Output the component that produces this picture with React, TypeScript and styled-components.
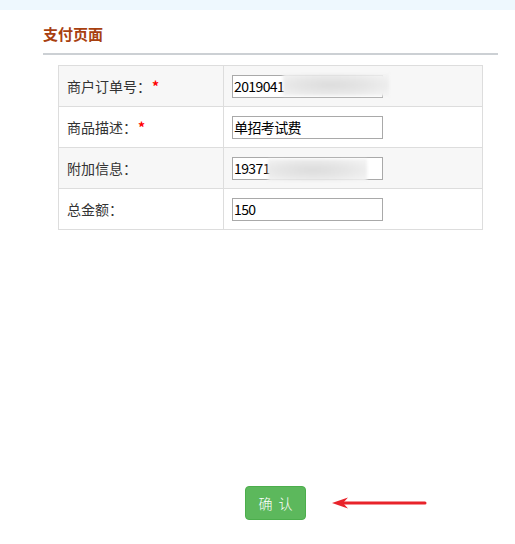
import React from "react";
import styled, { createGlobalStyle } from "styled-components";

const Global = createGlobalStyle`
  html, body { margin: 0; padding: 0; background: #fff; }
  body { font-family: "Noto Sans CJK SC", "Liberation Sans", sans-serif; }
`;

const TopBar = styled.div`
  height: 10px;
  background: #eef8fe;
`;

const Main = styled.div`
  width: 455px;
  margin-left: 43px;
`;

const Title = styled.h2`
  margin: 12px 0 0;
  padding-bottom: 7px;
  line-height: 24px;
  font-size: 15px;
  font-weight: bold;
  color: #a8400f;
  border-bottom: 2px solid #ccd0d4;
`;

const Table = styled.table`
  margin: 10px 0 0 15px;
  width: 425px;
  border-collapse: collapse;
  border: 1px solid #dddddd;
`;

const Row = styled.tr<{ $shade: boolean }>`
  height: 41px;
  background: ${(p) => (p.$shade ? "#f7f7f7" : "#ffffff")};
`;

const LabelCell = styled.td`
  width: 156px;
  padding: 0 0 0 8px;
  border: 1px solid #dddddd;
  font-size: 14px;
  color: #333;
  vertical-align: middle;
`;

const Star = styled.span`
  color: #ff0000;
  margin-left: 1px;
  font-weight: bold;
`;

const FieldCell = styled.td`
  padding: 0 0 0 8px;
  border: 1px solid #dddddd;
  vertical-align: middle;
`;

const FieldWrap = styled.div`
  position: relative;
  width: 151px;
  height: 23px;
`;

const Input = styled.input`
  box-sizing: border-box;
  display: block;
  width: 151px;
  height: 23px;
  margin: 0;
  padding: 0 1px;
  border: 1px solid #a9a9a9;
  background: #fff;
  font-family: "Noto Sans CJK SC", "Liberation Sans", sans-serif;
  font-size: 14px;
  letter-spacing: -0.6px;
  color: #000;
  outline: none;
`;

const Blur = styled.div<{ $l: number; $t: number; $w: number }>`
  position: absolute;
  left: ${(p) => p.$l}px;
  top: ${(p) => p.$t}px;
  width: ${(p) => p.$w}px;
  height: 22px;
  background: radial-gradient(ellipse at 45% 50%, #dcdcdc 0%, #e6e6e6 45%, #f2f2f2 85%);
  filter: blur(1.5px);
`;

const Footer = styled.div`
  display: flex;
  align-items: center;
  margin-top: 256px;
  padding-left: 245px;
  gap: 25px;
`;

const Button = styled.button`
  width: 61px;
  height: 34px;
  border: 1px solid #4cae4c;
  border-radius: 4px;
  background: #5cb85c;
  color: #fff;
  font-family: "Noto Sans CJK SC", sans-serif;
  font-size: 14px;
  font-weight: 300;
  letter-spacing: 6px;
  padding: 0 0 0 6px;
  cursor: pointer;
`;

const rows = [
  { label: "商户订单号：", req: true, value: "2019041", blur: { l: 51, t: -1, w: 106 } },
  { label: "商品描述：", req: true, value: "单招考试费" },
  { label: "附加信息：", req: false, value: "19371", blur: { l: 36, t: 2, w: 99 } },
  { label: "总金额：", req: false, value: "150" },
];

export default function App() {
  return (
    <>
      <Global />
      <TopBar />
      <Main>
        <Title>支付页面</Title>
        <Table>
          <tbody>
            {rows.map((r, i) => (
              <Row key={r.label} $shade={i % 2 === 0}>
                <LabelCell>
                  {r.label}
                  {r.req && <Star>*</Star>}
                </LabelCell>
                <FieldCell>
                  <FieldWrap>
                    <Input defaultValue={r.value} readOnly />
                    {r.blur && <Blur $l={r.blur.l} $t={r.blur.t} $w={r.blur.w} />}
                  </FieldWrap>
                </FieldCell>
              </Row>
            ))}
          </tbody>
        </Table>
      </Main>
      <Footer>
        <Button>确认</Button>
        <svg width="96" height="14" viewBox="0 0 96 14">
          <line x1="10" y1="7" x2="94" y2="7" stroke="#e8232a" strokeWidth="3" strokeLinecap="round" />
          <path d="M1 7 L17 1.5 L12 7 L17 12.5 Z" fill="#e8232a" />
        </svg>
      </Footer>
    </>
  );
}
